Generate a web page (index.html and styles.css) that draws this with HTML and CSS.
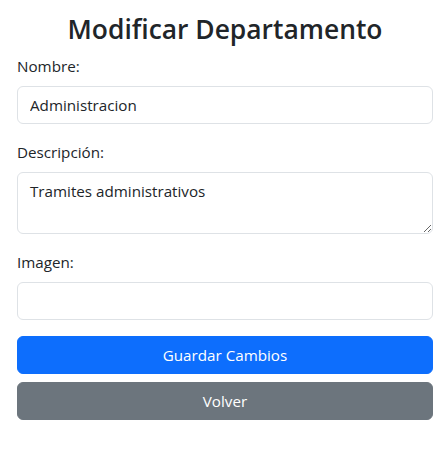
FILE: index.html
```html
<!DOCTYPE html>
<html lang="es">
<head>
<meta charset="utf-8">
<title>Modificar Departamento</title>
<link rel="stylesheet" href="styles.css">
</head>
<body>
<div class="page">
  <h1 class="title">Modificar Departamento</h1>
  <form class="form">
    <div class="field">
      <label class="label" for="nombre">Nombre:</label>
      <input class="control" id="nombre" type="text" value="Administracion">
    </div>
    <div class="field">
      <label class="label" for="descripcion">Descripción:</label>
      <textarea class="control area" id="descripcion" rows="2">Tramites administrativos</textarea>
    </div>
    <div class="field">
      <label class="label" for="imagen">Imagen:</label>
      <input class="control" id="imagen" type="text" value="">
    </div>
    <div class="actions">
      <button type="button" class="btn btn-primary">Guardar Cambios</button>
      <button type="button" class="btn btn-secondary">Volver</button>
    </div>
  </form>
</div>
</body>
</html>
```

FILE: styles.css
```css
* { box-sizing: border-box; }
html, body { margin: 0; background: #fff; }
body {
  font-family: "Open Sans", "Noto Sans", sans-serif;
  font-size: 15.2px;
  line-height: 24px;
  color: #212529;
}
.page {
  padding: 11.6px 14px 0 17px;
}
.title {
  margin: 0 0 8px;
  text-align: center;
  font-size: 26.4px;
  line-height: 34.4px;
  font-weight: 600;
  color: #212529;
}
.form { margin: 0; }
.field { margin-bottom: 16px; }
.label {
  display: block;
  margin-bottom: 8px;
  font-size: 15.2px;
  line-height: 24px;
}
.control {
  display: block;
  width: 100%;
  height: 38px;
  padding: 6px 12px;
  font-family: inherit;
  font-size: 15.2px;
  line-height: 24px;
  color: #212529;
  background: #fff;
  border: 1px solid #dee2e6;
  border-radius: 6px;
  outline: none;
}
.area {
  height: 62px;
  resize: vertical;
}
.actions {
  display: grid;
  gap: 8px;
}
.btn {
  display: block;
  width: 100%;
  height: 38px;
  padding: 6px 12px;
  font-family: inherit;
  font-size: 15.2px;
  line-height: 24px;
  color: #fff;
  border: 1px solid transparent;
  border-radius: 6px;
  text-align: center;
}
.btn-primary { background: #0d6efd; border-color: #0d6efd; }
.btn-secondary { background: #6c757d; border-color: #6c757d; }
```
